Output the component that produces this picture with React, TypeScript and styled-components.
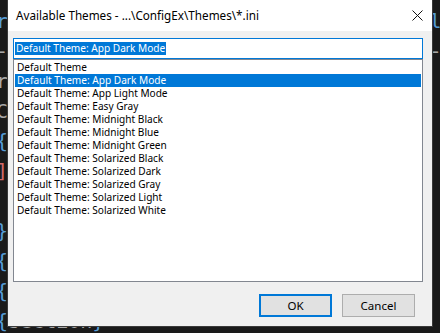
import React from "react";
import styled, { createGlobalStyle } from "styled-components";

const GlobalStyle = createGlobalStyle`
  html, body {
    margin: 0;
    padding: 0;
    background: #1a1a1a;
    overflow: hidden;
  }
`;

const Desktop = styled.div`
  position: relative;
  width: 440px;
  height: 333px;
  overflow: hidden;
  background: #1a1a1a;
`;

// code editor peeking out behind the dialog
const Editor = styled.div`
  display: flex;
  flex-direction: column;
  margin: 6px 0 0 -4px;
  font-family: "DejaVu Sans Mono", monospace;
  font-size: 20px;
  line-height: 30px;
  color: #a8a8a8;
  white-space: pre;
`;

const Code = styled.span<{ $c?: string }>`
  color: ${(p) => p.$c || "#a8a8a8"};
`;

const Dialog = styled.div`
  position: absolute;
  left: 8px;
  top: 0;
  width: 424px;
  height: 326px;
  display: flex;
  flex-direction: column;
  background: #f0f0f0;
  font-family: "Noto Sans", "Open Sans", sans-serif;
  box-shadow: 0 0 0 1px #3a3a3a;
`;

const TitleBar = styled.div`
  height: 31px;
  flex: none;
  display: flex;
  align-items: center;
  justify-content: space-between;
  background: #ffffff;
  padding: 0 9px 0 8px;
  font-size: 11.7px;
  color: #000;
`;

const Title = styled.span`
  margin-top: -1px;
`;

const Body = styled.div`
  flex: 1;
  display: flex;
  flex-direction: column;
  padding: 7px 9px 0 5px;
`;

const Edit = styled.div`
  height: 21px;
  box-sizing: border-box;
  border: 1px solid #0078d7;
  background: #fff;
  display: flex;
  align-items: center;
  padding-left: 1px;
  font-size: 10.1px;
`;

const Selection = styled.span`
  background: #0078d7;
  color: #fff;
  line-height: 13px;
  padding: 0 1px;
`;

const ListBox = styled.div`
  height: 223px;
  box-sizing: border-box;
  border: 1px solid #828790;
  background: #fff;
  padding: 1px 1px 0 1px;
  display: flex;
  flex-direction: column;
  font-size: 10.1px;
`;

const Item = styled.div<{ $sel?: boolean }>`
  height: 13px;
  line-height: 13px;
  padding-left: 2px;
  white-space: nowrap;
  background: ${(p) => (p.$sel ? "#0078d7" : "transparent")};
  color: ${(p) => (p.$sel ? "#fff" : "#000")};
`;

const Footer = styled.div`
  display: flex;
  justify-content: flex-end;
  gap: 10px;
  padding: 12px 8px 0 0;
`;

const Button = styled.div<{ $default?: boolean }>`
  width: 73px;
  height: 23px;
  box-sizing: border-box;
  display: flex;
  align-items: center;
  justify-content: center;
  background: #e1e1e1;
  border: ${(p) => (p.$default ? "2px solid #0078d7" : "1px solid #adadad")};
  font-size: 11.5px;
  color: #000;
`;

const themes = [
  "Default Theme",
  "Default Theme: App Dark Mode",
  "Default Theme: App Light Mode",
  "Default Theme: Easy Gray",
  "Default Theme: Midnight Black",
  "Default Theme: Midnight Blue",
  "Default Theme: Midnight Green",
  "Default Theme: Solarized Black",
  "Default Theme: Solarized Dark",
  "Default Theme: Solarized Gray",
  "Default Theme: Solarized Light",
  "Default Theme: Solarized White",
];

const CloseIcon = () => (
  <svg width="11" height="11" viewBox="0 0 11 11">
    <path d="M0.5 0.5 L10.5 10.5 M10.5 0.5 L0.5 10.5" stroke="#111" strokeWidth="1" />
  </svg>
);

const App = () => {
  const selected = 1;
  return (
    <Desktop>
      <GlobalStyle />
      <Editor>
        <span><Code $c="#569cd6">ru</Code>                                  <Code $c="#569cd6">le</Code></span>
        <span>-                                   -</span>
        <span>r</span>
        <span>C</span>
        <span><Code $c="#569cd6">{"{"}</Code></span>
        <span><Code $c="#d16969">]</Code></span>
        <span> </span>
        <span><Code $c="#569cd6">{"}"}</Code></span>
        <span><Code $c="#569cd6">{"{"}</Code></span>
        <span><Code $c="#569cd6">{"{"}</Code></span>
        <span><Code $c="#569cd6">{"{"}</Code>section<Code $c="#569cd6">{"}"}</Code></span>
      </Editor>
      <Dialog>
        <TitleBar>
          <Title>Available Themes - ...\ConfigEx\Themes\*.ini</Title>
          <CloseIcon />
        </TitleBar>
        <Body>
          <Edit>
            <Selection>{themes[selected]}</Selection>
          </Edit>
          <ListBox>
            {themes.map((t, i) => (
              <Item key={t} $sel={i === selected}>
                {t}
              </Item>
            ))}
          </ListBox>
          <Footer>
            <Button $default>OK</Button>
            <Button>Cancel</Button>
          </Footer>
        </Body>
      </Dialog>
    </Desktop>
  );
};

export default App;
